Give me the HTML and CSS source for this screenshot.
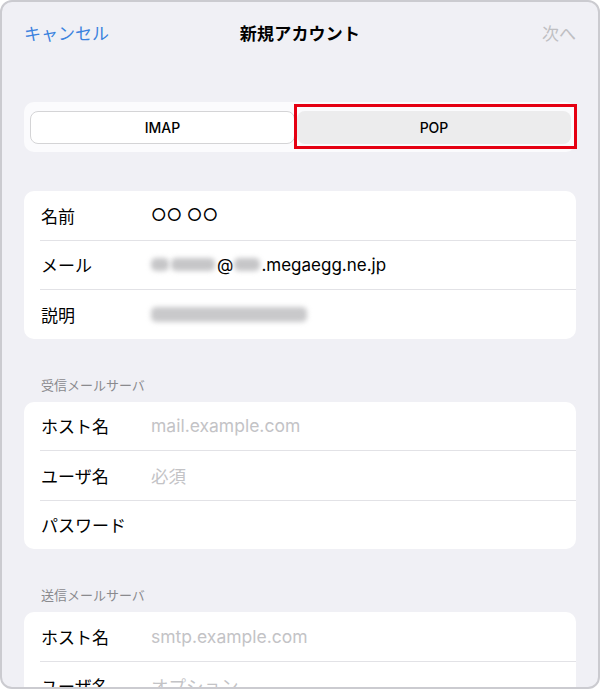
FILE: index.html
```html
<!DOCTYPE html>
<html lang="ja">
<head>
    <meta charset="UTF-8">
    <meta name="viewport" content="width=device-width, initial-scale=1.0">
    <title>新規アカウント</title>
    <link rel="stylesheet" href="styles.css">
</head>
<body>
    <div class="sheet">
        <header class="nav">
            <span class="nav-cancel">キャンセル</span>
            <span class="nav-title">新規アカウント</span>
            <span class="nav-next">次へ</span>
        </header>

        <div class="segment">
            <div class="seg seg-imap">IMAP</div>
            <div class="seg seg-pop">POP</div>
            <div class="highlight"></div>
        </div>

        <section class="card first-card">
            <div class="row">
                <span class="label">名前</span>
                <span class="value">○○ ○○</span>
            </div>
            <div class="row">
                <span class="label">メール</span>
                <span class="value"><span class="blur b1a"></span><span class="blur b1b"></span>@<span class="blur b2"></span>.megaegg.ne.jp</span>
            </div>
            <div class="row">
                <span class="label">説明</span>
                <span class="value"><span class="blur b3"></span></span>
            </div>
        </section>

        <h2 class="group-title">受信メールサーバ</h2>
        <section class="card">
            <div class="row">
                <span class="label">ホスト名</span>
                <span class="value placeholder">mail.example.com</span>
            </div>
            <div class="row">
                <span class="label">ユーザ名</span>
                <span class="value placeholder">必須</span>
            </div>
            <div class="row">
                <span class="label">パスワード</span>
                <span class="value"></span>
            </div>
        </section>

        <h2 class="group-title">送信メールサーバ</h2>
        <section class="card">
            <div class="row">
                <span class="label">ホスト名</span>
                <span class="value placeholder">smtp.example.com</span>
            </div>
            <div class="row">
                <span class="label">ユーザ名</span>
                <span class="value placeholder">オプション</span>
            </div>
            <div class="row">
                <span class="label">パスワード</span>
                <span class="value"></span>
            </div>
        </section>
    </div>
</body>
</html>
```

FILE: styles.css
```css
body {
    margin: 0;
    background: #ffffff;
    font-family: "Inter", "Noto Sans CJK JP", sans-serif;
    color: #000000;
}

.sheet {
    height: 689px;
    box-sizing: border-box;
    border: 2px solid #cbcbd0;
    border-radius: 12px;
    overflow: hidden;
    background: #f0f0f5;
}

.nav {
    height: 60px;
    padding: 0 22px;
    display: flex;
    align-items: center;
    justify-content: space-between;
    font-size: 17px;
}

.nav-cancel {
    color: #3b82de;
    width: 100px;
}

.nav-title {
    font-weight: bold;
    letter-spacing: 0.2px;
}

.nav-next {
    color: #bfbfc3;
    width: 100px;
    text-align: right;
}

.segment {
    position: relative;
    margin: 40px 22px 0;
    padding: 9px 5px 8px 6px;
    background: #fbfbfd;
    border-radius: 10px;
    display: grid;
    grid-template-columns: 265px 1fr;
    gap: 2px;
}

.seg {
    height: 33px;
    box-sizing: border-box;
    border-radius: 8px;
    display: flex;
    align-items: center;
    justify-content: center;
    font-size: 14px;
    font-weight: 500;
}

.seg-imap {
    background: #ffffff;
    border: 1.5px solid #d4d4d6;
}

.seg-pop {
    background: #ececed;
}

.highlight {
    position: absolute;
    left: 270px;
    top: 2px;
    width: 283px;
    height: 45px;
    box-sizing: border-box;
    border: 3px solid #e50012;
}

.card {
    margin: 0 22px;
    background: #ffffff;
    border-radius: 10px;
}

.first-card {
    margin-top: 39px;
}

.row {
    margin-left: 16px;
    height: 48.5px;
    display: flex;
    align-items: center;
    border-bottom: 1px solid #e2e2e6;
    font-size: 17px;
}

.row:last-child {
    border-bottom: 0;
}

.label {
    width: 110px;
    padding-left: 1px;
    flex-shrink: 0;
}

.value {
    display: flex;
    align-items: center;
}

.placeholder {
    color: #c3c3c6;
    font-size: 17.5px;
}

.blur {
    display: inline-block;
    height: 13px;
    background: #c6c6c8;
    border-radius: 5px;
    filter: blur(2.5px);
}

.b1a {
    width: 18px;
    margin-right: 2px;
}

.b1b {
    width: 44px;
    margin-right: 2px;
}

.b2 {
    width: 26px;
    margin: 0 1px;
}

.b3 {
    width: 156px;
    height: 15px;
    background: #c9c9cb;
}

.group-title {
    margin: 37px 22px 8px;
    padding-left: 17px;
    font-size: 13px;
    line-height: 18px;
    font-weight: normal;
    color: #8a8a8e;
}
```
